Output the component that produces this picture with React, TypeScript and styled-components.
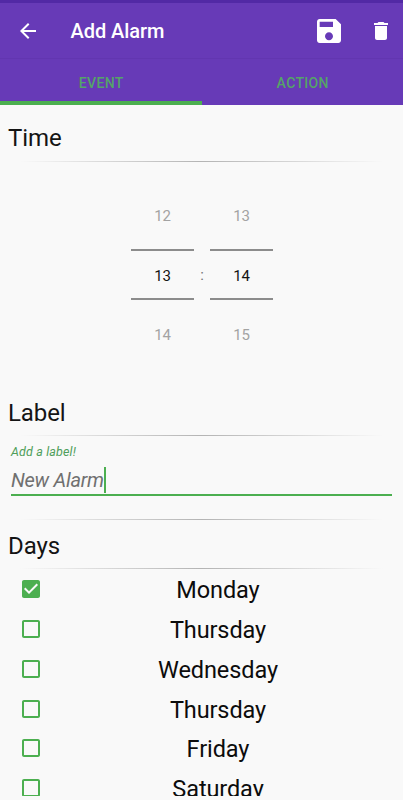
import React from "react";
import styled, { createGlobalStyle } from "styled-components";

const GREEN = "#4caf50";

const GlobalStyle = createGlobalStyle`
  * { box-sizing: border-box; }
  body { margin: 0; background: #f9f9f9; }
`;

const Screen = styled.div`
  display: flex;
  flex-direction: column;
  width: 403px;
  height: 800px;
  padding-bottom: 4px;
  overflow: hidden;
  background: #f9f9f9;
  color: #141414;
  font-family: Roboto, sans-serif;
`;

const StatusStrip = styled.div`
  flex: none;
  height: 3px;
  background: #5229a5;
`;

const Toolbar = styled.header`
  flex: none;
  display: flex;
  align-items: center;
  height: 56px;
  padding: 0 10.5px 0 15.5px;
  background: #673ab7;
  border-bottom: 1px solid #6236b0;
`;

const IconButton = styled.button<{ $gap?: number }>`
  display: flex;
  padding: 0;
  margin-left: ${(p) => p.$gap ?? 0}px;
  border: 0;
  background: none;
  color: #fff;
`;

const Title = styled.h1`
  flex: 1;
  margin: 0 0 0 31px;
  font-size: 20px;
  font-weight: 500;
  line-height: 24px;
  letter-spacing: -0.05px;
  color: #fff;
`;

const Tabs = styled.nav`
  flex: none;
  display: flex;
  height: 46px;
  background: #673ab7;
`;

const Tab = styled.button<{ $active?: boolean }>`
  flex: 1;
  padding: 5px 0 0 1px;
  border: 0;
  border-bottom: 4px solid ${(p) => (p.$active ? GREEN : "transparent")};
  background: none;
  color: #55a468;
  font: 500 14px/18px Roboto, sans-serif;
  letter-spacing: 0.35px;
`;

const Heading = styled.h2<{ $top: number }>`
  flex: none;
  margin: ${(p) => p.$top}px 0 0 8px;
  font-size: 24px;
  font-weight: 400;
  line-height: 28px;
  letter-spacing: -0.1px;
`;

const Divider = styled.div<{ $top: number }>`
  flex: none;
  height: 1px;
  margin: ${(p) => p.$top}px 20px 0;
  background: linear-gradient(90deg, transparent, #b4b4b4 50%, transparent);
`;

const TimePicker = styled.div`
  flex: none;
  display: flex;
  justify-content: center;
  align-items: center;
  margin-top: 20px;
  height: 184px;
  font-size: 15px;
  line-height: 18px;
`;

const Wheel = styled.div`
  display: flex;
  flex-direction: column;
  width: 63px;
  text-align: center;
  letter-spacing: -0.1px;
`;

const Faded = styled.div<{ $drop: number }>`
  display: flex;
  justify-content: center;
  align-items: center;
  height: 67px;
  padding: ${(p) => p.$drop}px 0 0 1px;
  color: #a3a3a3;
`;

const Selected = styled.div`
  display: flex;
  justify-content: center;
  align-items: center;
  height: 51px;
  padding: 4px 0 0 1px;
  border-top: 2px solid #8c8c8c;
  border-bottom: 2px solid #8c8c8c;
`;

const Colon = styled.span`
  width: 16px;
  padding: 2px 0 0 1px;
  text-align: center;
  color: #707070;
`;

const Field = styled.label`
  flex: none;
  display: flex;
  flex-direction: column;
  margin: 8px 11px 0;
  height: 52px;
  border-bottom: 2px solid ${GREEN};
  font-style: italic;
`;

const FieldHint = styled.span`
  font-size: 12.5px;
  line-height: 16px;
  letter-spacing: 0.15px;
  color: #4f9e5a;
`;

const FieldValue = styled.span`
  display: flex;
  align-items: center;
  margin-top: 6px;
  font-size: 20px;
  line-height: 28px;
  letter-spacing: -0.25px;
  color: #707070;
`;

const Caret = styled.i`
  width: 2px;
  height: 26px;
  background: ${GREEN};
`;

const DayList = styled.ul`
  flex: 1;
  min-height: 0;
  margin: 0;
  padding: 0.4px 0 0;
  overflow: hidden;
  list-style: none;
`;

const DayRow = styled.li`
  display: flex;
  align-items: center;
  height: 39.8px;
  padding-left: 19px;
`;

const DayName = styled.span`
  flex: 1;
  padding: 2px 10px 0 0;
  text-align: center;
  font-size: 23.5px;
  line-height: 28px;
  letter-spacing: -0.1px;
  color: #0c0c0c;
`;

const Icon = ({ path, size = 24 }: { path: string; size?: number }) => (
  <svg width={size} height={size} viewBox="0 0 24 24" fill="currentColor">
    <path d={path} />
  </svg>
);

const BACK = "M20 11H7.83l5.59-5.59L12 4l-8 8 8 8 1.41-1.41L7.83 13H20v-2z";
const SAVE =
  "M17 3H5c-1.11 0-2 .9-2 2v14c0 1.1.89 2 2 2h14c1.1 0 2-.9 2-2V7l-4-4zm-5 16c-1.66 0-3-1.34-3-3s1.34-3 3-3 3 1.34 3 3-1.34 3-3 3zm3-10H5V5h10v4z";
const TRASH =
  "M6 19c0 1.1.9 2 2 2h8c1.1 0 2-.9 2-2V7H6v12zM19 4h-3.5l-1-1h-5l-1 1H5v2h14V4z";
const CHECKED =
  "M19 3H5c-1.11 0-2 .9-2 2v14c0 1.1.89 2 2 2h14c1.11 0 2-.9 2-2V5c0-1.1-.89-2-2-2zm-9 14l-5-5 1.41-1.41L10 14.17l7.59-7.59L19 8l-9 9z";
const UNCHECKED =
  "M19 5v14H5V5h14m0-2H5c-1.1 0-2 .9-2 2v14c0 1.1.9 2 2 2h14c1.1 0 2-.9 2-2V5c0-1.1-.9-2-2-2z";

const CheckBox = styled.span`
  display: flex;
  color: ${GREEN};
`;

const WHEELS = [
  ["12", "13", "14"],
  ["13", "14", "15"],
];
const DAYS = ["Monday", "Thursday", "Wednesday", "Thursday", "Friday", "Saturday"];

const NumberWheel = ({ values }: { values: string[] }) => (
  <Wheel>
    <Faded $drop={2}>{values[0]}</Faded>
    <Selected>{values[1]}</Selected>
    <Faded $drop={4}>{values[2]}</Faded>
  </Wheel>
);

export default function App() {
  return (
    <>
      <GlobalStyle />
      <Screen>
        <StatusStrip />
        <Toolbar>
          <IconButton aria-label="Back"><Icon path={BACK} /></IconButton>
          <Title>Add Alarm</Title>
          <IconButton aria-label="Save"><Icon path={SAVE} size={32} /></IconButton>
          <IconButton aria-label="Delete" $gap={24}><Icon path={TRASH} /></IconButton>
        </Toolbar>
        <Tabs>
          <Tab $active>EVENT</Tab>
          <Tab>ACTION</Tab>
        </Tabs>

        <Heading $top={19}>Time</Heading>
        <Divider $top={9} />
        <TimePicker>
          <NumberWheel values={WHEELS[0]} />
          <Colon>:</Colon>
          <NumberWheel values={WHEELS[1]} />
        </TimePicker>

        <Heading $top={33}>Label</Heading>
        <Divider $top={8} />
        <Field>
          <FieldHint>Add a label!</FieldHint>
          <FieldValue>New Alarm<Caret /></FieldValue>
        </Field>

        <Divider $top={23} />
        <Heading $top={12}>Days</Heading>
        <Divider $top={8} />
        <DayList>
          {DAYS.map((day, i) => (
            <DayRow key={i}>
              <CheckBox><Icon path={i === 0 ? CHECKED : UNCHECKED} /></CheckBox>
              <DayName>{day}</DayName>
            </DayRow>
          ))}
        </DayList>
      </Screen>
    </>
  );
}
